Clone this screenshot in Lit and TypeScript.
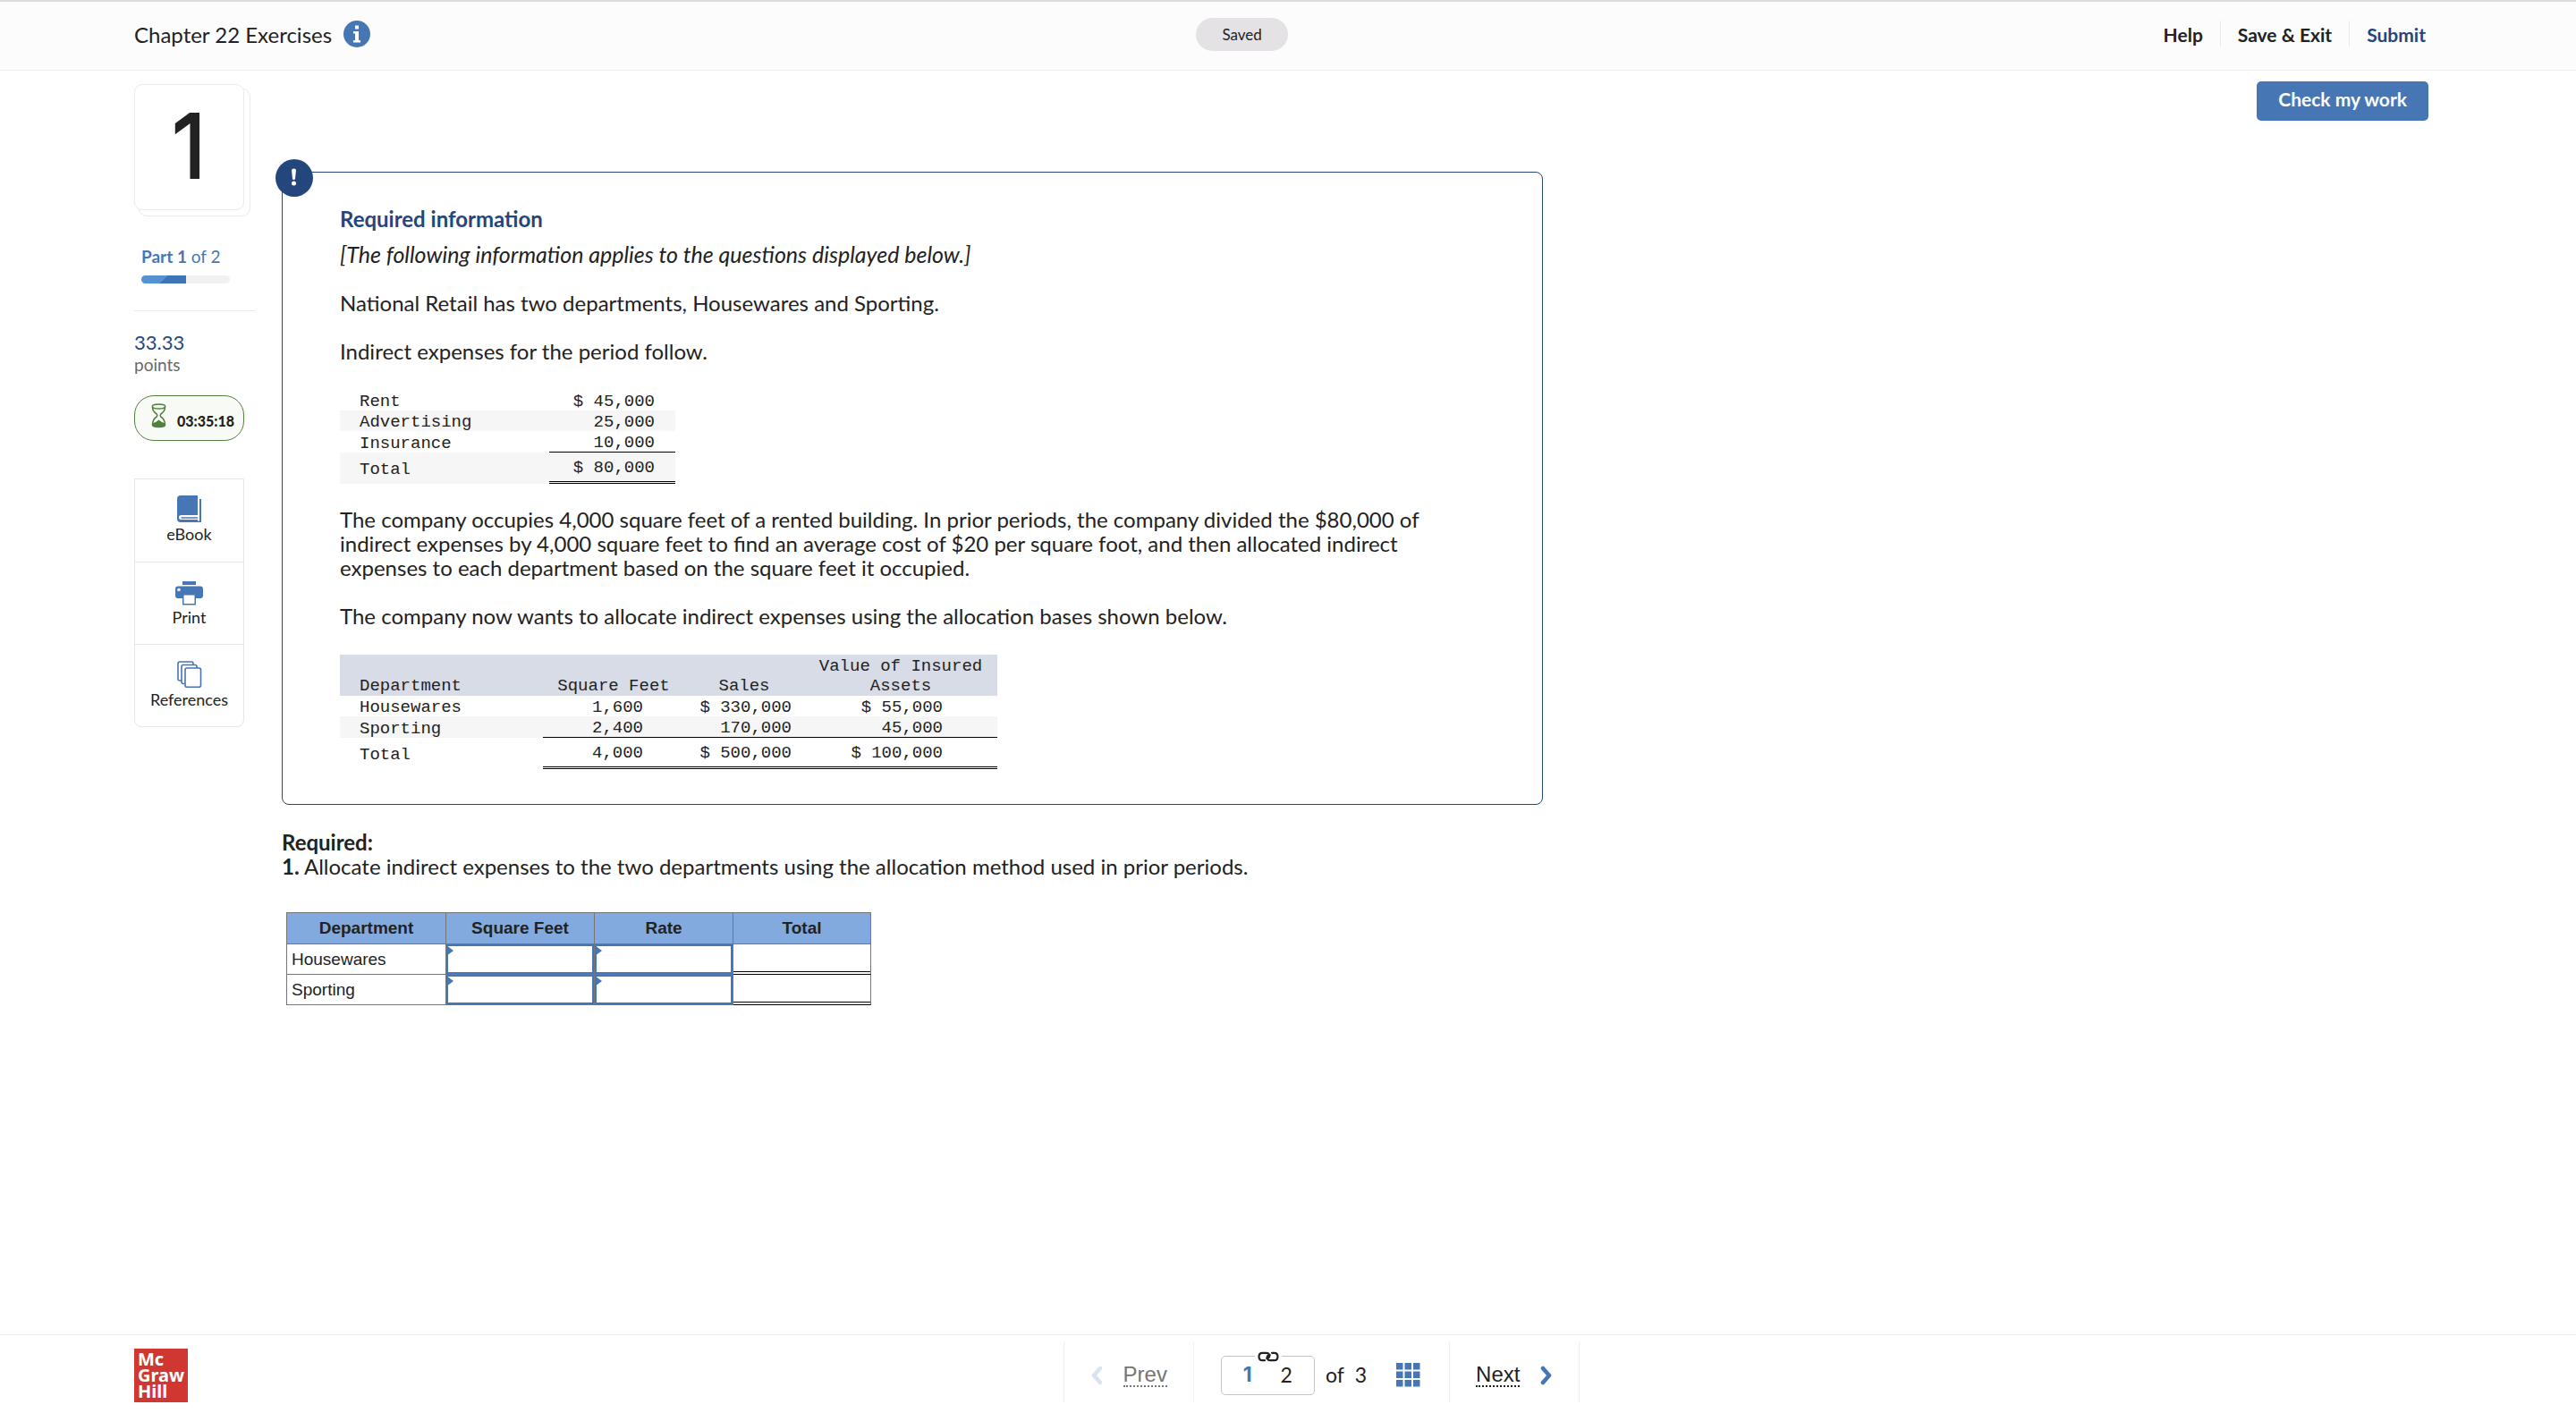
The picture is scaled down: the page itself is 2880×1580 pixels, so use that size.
import { LitElement, html, css, svg } from "lit";
import { customElement } from "lit/decorators.js";

const bookIcon = svg`<svg class="tool-icon" width="28" height="30" viewBox="0 0 28 30" aria-hidden="true">
  <path d="M4 0H23V22H4.500Q2 22 2 24.500T4.500 27H23V30H4Q0 30 0 26V4Q0 0 4 0Z" fill="#4676b4"/>
  <path d="M25 4H27V30H23V28.500H25Z" fill="#4676b4"/>
  <path d="M4.500 25H23" stroke="#4676b4" stroke-width="1.500"/>
</svg>`;

const printIcon = svg`<svg class="tool-icon" width="31" height="30" viewBox="0 0 31 30" aria-hidden="true">
  <path d="M8 3H23V7H8Z" fill="#4676b4"/>
  <path d="M3 8.500H28Q31 8.500 31 11.500V19Q31 22 28 22H23V29.500H8V22H3Q0 22 0 19V11.500Q0 8.500 3 8.500Z" fill="#4676b4"/>
  <path d="M9.500 18.500H21.500V28H9.500Z" fill="#fff"/>
  <circle cx="4" cy="12.500" r="1.800" fill="#fff"/>
</svg>`;

const pagesIcon = svg`<svg class="tool-icon" width="28" height="30" viewBox="0 0 28 30" aria-hidden="true">
  <g fill="#fff" stroke="#4676b4" stroke-width="1.600">
    <rect x="1" y="1" width="17" height="21" rx="2"/>
    <rect x="5" y="4.500" width="17" height="21" rx="2"/>
    <rect x="9" y="8" width="17.500" height="21.200" rx="2"/>
  </g>
</svg>`;

const hourglassIcon = svg`<svg class="timer-icon" width="17" height="28" viewBox="0 0 17 28" aria-hidden="true">
  <g fill="none" stroke="#528040" stroke-width="1.500">
    <ellipse cx="8.500" cy="3.500" rx="7.200" ry="2.500"/>
    <path d="M1.500 4Q1.500 9 6.200 12Q7.500 13.500 6.200 15Q1.500 18 1.500 24Q1.500 26.500 8.500 26.500T15.500 24Q15.500 18 10.800 15Q9.500 13.500 10.800 12Q15.500 9 15.500 4"/>
  </g>
  <path d="M2 22Q6 21 8.500 18.500Q11 21 15 22V25Q12 27 8.500 27T2 25Z" fill="#528040"/>
</svg>`;

const linkIcon = svg`<svg class="link-icon" width="30" height="14" viewBox="0 0 30 14" aria-hidden="true">
  <rect width="30" height="14" fill="#fff"/>
  <g fill="none" stroke="#222" stroke-width="2.200" stroke-linecap="round">
    <path d="M11 11.200H8.500Q4.500 11.200 4.500 7T8.500 2.800H12.500Q16.300 2.800 16.300 6.200Q16.300 8.300 13.300 8.800"/>
    <path d="M19 2.800H21.500Q25.500 2.800 25.500 7T21.500 11.200H17.500Q13.700 11.200 13.700 7.800Q13.700 5.700 16.700 5.200"/>
  </g>
</svg>`;

const chevron = (cls: string, d: string) => svg`<svg class=${cls} width="14" height="24" viewBox="0 0 14 24" aria-hidden="true">
  <path d=${d} fill="none" stroke="currentColor" stroke-width="4.500" stroke-linecap="round" stroke-linejoin="round"/>
</svg>`;

const gridIcon = svg`<svg width="27" height="27" viewBox="0 0 27 27" aria-hidden="true">
  ${[0, 1, 2].map((r) => [0, 1, 2].map((c) => svg`<rect x=${c * 9.5} y=${r * 9.5} width="7.500" height="7.500" fill="#4676b4"/>`))}
</svg>`;

const TOOLS = [
  { label: "eBook", icon: bookIcon },
  { label: "Print", icon: printIcon },
  { label: "References", icon: pagesIcon },
];

const EXPENSES = [
  ["Rent", "$ 45,000"],
  ["Advertising", "25,000"],
  ["Insurance", "10,000"],
];

const BASES = [
  ["Housewares", "1,600", "$ 330,000", "$ 55,000"],
  ["Sporting", "2,400", "170,000", "45,000"],
];

@customElement("app-root")
export class AppRoot extends LitElement {
  static styles = css`
    :host {
      display: flex;
      flex-direction: column;
      min-height: 100vh;
      box-sizing: border-box;
      background: #fff;
      color: #222;
      font: 24px/27px Lato, "Open Sans", sans-serif;
    }
    *, *::before, *::after { box-sizing: border-box; }
    button { font: inherit; color: inherit; background: none; border: 0; padding: 0; cursor: pointer; }
    p { margin: 0; }

    .topbar {
      display: grid;
      grid-template-columns: 14fr auto 15fr;
      align-items: center;
      height: 79px;
      padding: 0 168px 4px 150px;
      background: #fcfcfc;
      border-top: 2px solid #dcdcdc;
      border-bottom: 1px solid #eee;
    }
    .title { display: flex; align-items: center; gap: 13px; }
    .title h1 { margin: 0; font-size: 24px; font-weight: 400; }
    .info { display: flex; }
    .saved {
      padding: 5px 29px;
      border-radius: 19px;
      background: #e4e2e5;
      font-size: 17px;
    }
    .actions { display: flex; justify-content: flex-end; font-size: 21px; font-weight: 700; }
    .actions button { height: 30px; padding: 0 19px; border-right: 1px solid #eaeaea; }
    .actions button:last-child { padding-right: 0; border: 0; color: #23477d; }

    .main { flex: 1; display: flex; align-items: flex-start; padding: 0 165px 0 150px; }
    .side { flex: none; width: 135px; margin-right: 30px; padding-top: 15px; }
    .stack { position: relative; width: 123px; height: 141px; }
    .stack::before {
      content: "";
      position: absolute;
      inset: 5px -7px -7px 5px;
      border: 1px solid #ebebeb;
      border-radius: 9px;
    }
    .number {
      position: relative;
      display: flex;
      align-items: center;
      justify-content: center;
      height: 100%;
      padding-bottom: 4px;
      border: 1px solid #ebebeb;
      border-radius: 9px;
      background: #fff;
      font: 300 96px/120px Inter, sans-serif;
      -webkit-text-stroke: 4px #222;
      stroke-linejoin: round;
    }
    .part { margin-top: 38px; padding: 0 28px 30px 8px; border-bottom: 1px solid #e9e9e9; }
    .part p { color: #4676b4; font-size: 19px; }
    .progress { height: 9px; margin-top: 8px; border-radius: 5px; background: #f1f1f1; overflow: hidden; }
    .progress-fill { height: 9px; background: linear-gradient(135deg, #5592d3 50%, #3c74b8 50%); }
    .points { margin-top: 21px; color: #23477d; font-size: 22px; }
    .points-label { color: #696969; font-size: 19px; line-height: 23px; }
    .timer {
      display: flex;
      justify-content: space-between;
      width: 123px;
      height: 51px;
      margin-top: 23px;
      padding: 8px 10px 8px 18px;
      border: 1px solid #528040;
      border-radius: 22px;
      background: #f7faf5;
      font-size: 16px;
      font-weight: 900;
      line-height: 40px;
    }
    .tools {
      width: 123px;
      margin-top: 42px;
      border: 1px solid #e7e7e7;
      border-radius: 0 0 8px 8px;
    }
    .tools button {
      display: flex;
      flex-direction: column;
      align-items: center;
      width: 100%;
      height: 92px;
      padding-top: 18px;
      font-size: 18px;
      line-height: 27px;
    }
    .tools button + button { border-top: 1px solid #e7e7e7; }
    .tool-icon { flex: none; }

    .content { flex: 0 1 1410px; padding-top: 113px; }
    .info-box {
      position: relative;
      padding: 38px 64px 39px;
      border: 1px solid #23477d;
      border-radius: 8px;
    }
    .alert { position: absolute; left: -8px; top: -15px; }
    .info-box h2 { margin: 0; color: #23477d; font-size: 24px; font-weight: 700; line-height: 27px; }
    .lead { margin-top: 13px; font-size: 25px; font-style: italic; }
    .gap { margin-top: 27px; }

    .ledger {
      border-spacing: 0;
      margin: 30px 0 26px;
      font: 19px/19px "Liberation Mono", monospace;
    }
    .ledger th, .ledger td { height: 23px; padding: 3px 0 0; font-weight: 400; vertical-align: bottom; }
    .ledger tbody th { padding-left: 22px; text-align: left; }
    .ledger td { text-align: right; white-space: pre; }
    .ledger thead th { background: #d8dce6; text-align: center; line-height: 22px; padding-top: 2px; }
    .ledger thead th:first-child { padding-left: 22px; text-align: left; }
    .ledger .stripe { background: #f6f6f6; }
    .ledger .rule td { height: 24px; border-bottom: 1px solid #000; }
    .ledger .total th, .ledger .total td { height: 35px; vertical-align: middle; }
    .ledger .total td { border-bottom: 3px double #000; }
    .expenses { width: 375px; }
    .ledger.expenses td { width: 141px; padding-right: 23px; }
    .bases { width: 735px; }
    .ledger.bases { margin-bottom: 0; }
    .bases .c-dept { width: 227px; }
    .bases .c-feet { width: 158px; }
    .bases .c-sales { width: 134px; }
    .ledger.bases td:nth-child(2) { padding-right: 46px; }
    .ledger.bases td:nth-child(3) { padding-right: 14px; }
    .ledger.bases td:nth-child(4) { padding-right: 61px; }
    .ledger.bases thead th:last-child { padding: 2px 14px 0; }

    .required { margin-top: 28px; }
    .answers {
      width: 654px;
      margin: 38px 5px 0;
      border-spacing: 0;
      border-top: 1px solid #767676;
      border-left: 1px solid #767676;
      font: 19px/22px "Liberation Sans", Arial, sans-serif;
      table-layout: fixed;
    }
    .answers th, .answers td {
      position: relative;
      height: 34px;
      padding: 0;
      border-right: 1px solid #767676;
      border-bottom: 1px solid #767676;
    }
    .answers thead th { height: 35px; background: #82aade; font-weight: 700; }
    .answers tbody th { padding-left: 5px; font-weight: 400; text-align: left; }
    .answers .c-dept { width: 178px; }
    .answers .c-feet { width: 166px; }
    .answers .c-rate { width: 155px; }
    .answers input {
      display: block;
      width: 100%;
      height: 33px;
      padding: 0 12px;
      border: 2px solid #4676b4;
      background: #fff;
      font: inherit;
    }
    .answers .flag { position: absolute; left: 0; top: 1px; }
    .answers .sum { border-bottom-color: #000; vertical-align: top; }
    .answers .sum-line { display: block; height: 31px; border-bottom: 1px solid #000; }

    .check {
      flex: none;
      height: 44px;
      margin: 12px 0 0 auto;
      padding: 0 24px 5px;
      border-radius: 5px;
      background: #4676b4;
      color: #fff;
      font-size: 21px;
      font-weight: 700;
    }

    .footer {
      display: grid;
      grid-template-columns: 1fr auto 1fr;
      height: 88px;
      padding: 0 75px 0 150px;
      border-top: 1px solid #eee;
    }
    .logo {
      width: 60px;
      height: 60px;
      margin-top: 15px;
      padding: 3px 0 0 4px;
      background: #d13731;
      color: #fff;
      font: 700 20px/18px "Noto Sans", sans-serif;
    }
    .pager { display: flex; height: 67px; margin-top: 8px; border-right: 1px solid #eee; }
    .pager-cell { display: flex; align-items: center; border-left: 1px solid #eee; padding-top: 6px; }
    .step {
      display: flex;
      align-items: center;
      gap: 23px;
      padding: 0 29px;
      font-family: "Liberation Sans", Arial, sans-serif;
    }
    .step.prev { color: #757575; }
    .step span { border-bottom: 2px dotted currentColor; line-height: 24px; }
    .chev-prev { color: #dae4f1; }
    .chev-next { color: #4676b4; }
    .pages { gap: 12px; padding-right: 32px; padding-left: 30px; font-size: 23px; }
    .group {
      position: relative;
      display: flex;
      justify-content: space-around;
      align-items: center;
      width: 105px;
      height: 44px;
      padding: 0 8px;
      border: 1px solid #c4c4c4;
      border-radius: 5px;
    }
    .group .current { color: #4676b4; font-family: Inter, sans-serif; font-weight: 700; }
    .link-icon { position: absolute; left: 37px; top: -7px; }
    .all { display: flex; margin-left: 21px; }
  `;

  render() {
    return html`
      <header class="topbar">
        <div class="title">
          <h1>Chapter 22 Exercises</h1>
          <button class="info" aria-label="Assignment information">
            <svg width="30" height="30" viewBox="0 0 30 30" aria-hidden="true">
              <circle cx="15" cy="15" r="15" fill="#4676b4" />
              <path d="M13 5.500H17V9.500H13ZM11 12H17V22H19V24.500H11V22H13V14.500H11Z" fill="#fff" />
            </svg>
          </button>
        </div>
        <div class="saved">Saved</div>
        <nav class="actions">
          <button>Help</button><button>Save &amp; Exit</button><button>Submit</button>
        </nav>
      </header>

      <main class="main">
        <aside class="side">
          <div class="stack"><div class="number">1</div></div>
          <div class="part">
            <p><b>Part 1</b> of 2</p>
            <div class="progress"><div class="progress-fill" style="width:50%"></div></div>
          </div>
          <div class="points">33.33</div>
          <div class="points-label">points</div>
          <div class="timer">${hourglassIcon}<span>03:35:18</span></div>
          <div class="tools">
            ${TOOLS.map((t) => html`<button>${t.icon}<span>${t.label}</span></button>`)}
          </div>
        </aside>

        <div class="content">
          <section class="info-box">
            <svg class="alert" width="42" height="42" viewBox="0 0 42 42" aria-hidden="true">
              <circle cx="21" cy="21" r="21" fill="#23477d" />
              <path d="M18 12.500Q18 10.500 20.500 10.500T23 12.500L22 22Q21.800 23 20.500 23T19 22Z" fill="#fff" />
              <circle cx="20.500" cy="27" r="2.500" fill="#fff" />
            </svg>
            <h2>Required information</h2>
            <p class="lead">[The following information applies to the questions displayed below.]</p>
            <p class="gap">National Retail has two departments, Housewares and Sporting.</p>
            <p class="gap">Indirect expenses for the period follow.</p>
            <table class="ledger expenses">
              <tbody>
                ${EXPENSES.map(([name, amount], i) => html`
                  <tr class=${i === 1 ? "stripe" : i === 2 ? "rule" : ""}>
                    <th scope="row">${name}</th><td>${amount}</td>
                  </tr>`)}
                <tr class="stripe total"><th scope="row">Total</th><td>$ 80,000</td></tr>
              </tbody>
            </table>
            <p>
              The company occupies 4,000 square feet of a rented building. In prior periods, the company divided the $80,000 of
              indirect expenses by 4,000 square feet to find an average cost of $20 per square foot, and then allocated indirect
              expenses to each department based on the square feet it occupied.
            </p>
            <p class="gap">The company now wants to allocate indirect expenses using the allocation bases shown below.</p>
            <table class="ledger bases">
              <thead>
                <tr>
                  <th scope="col" class="c-dept">Department</th>
                  <th scope="col" class="c-feet">Square Feet</th>
                  <th scope="col" class="c-sales">Sales</th>
                  <th scope="col">Value of Insured Assets</th>
                </tr>
              </thead>
              <tbody>
                ${BASES.map(([name, ...cells], i) => html`
                  <tr class=${i === 1 ? "stripe rule" : ""}>
                    <th scope="row">${name}</th>${cells.map((c) => html`<td>${c}</td>`)}
                  </tr>`)}
                <tr class="total"><th scope="row">Total</th><td>4,000</td><td>$ 500,000</td><td>$ 100,000</td></tr>
              </tbody>
            </table>
          </section>

          <p class="required">
            <b>Required:</b><br />
            <b>1.</b> Allocate indirect expenses to the two departments using the allocation method used in prior periods.
          </p>

          <table class="answers">
            <thead>
              <tr>
                <th scope="col" class="c-dept">Department</th>
                <th scope="col" class="c-feet">Square Feet</th>
                <th scope="col" class="c-rate">Rate</th>
                <th scope="col">Total</th>
              </tr>
            </thead>
            <tbody>
              ${["Housewares", "Sporting"].map((dept) => html`
                <tr>
                  <th scope="row">${dept}</th>
                  ${["Square Feet", "Rate"].map((col) => html`
                    <td>
                      <input type="text" aria-label=${`${dept} ${col}`} />
                      <svg class="flag" width="8" height="12" viewBox="0 0 8 12" aria-hidden="true">
                        <path d="M0 0L8 6L0 12Z" fill="#4676b4" />
                      </svg>
                    </td>`)}
                  <td class="sum"><span class="sum-line"></span></td>
                </tr>`)}
            </tbody>
          </table>
        </div>

        <button class="check">Check my work</button>
      </main>

      <footer class="footer">
        <div class="logo">Mc<br />Graw<br />Hill</div>
        <nav class="pager">
          <div class="pager-cell">
            <button class="step prev">${chevron("chev-prev", "M11 4L4 12L11 20")}<span>Prev</span></button>
          </div>
          <div class="pager-cell pages">
            <div class="group">
              ${linkIcon}
              <button class="current">1</button><button>2</button>
            </div>
            <span>of</span><span>3</span>
            <button class="all" aria-label="All questions">${gridIcon}</button>
          </div>
          <div class="pager-cell">
            <button class="step"><span>Next</span>${chevron("chev-next", "M3 4L10 12L3 20")}</button>
          </div>
        </nav>
      </footer>
    `;
  }
}
